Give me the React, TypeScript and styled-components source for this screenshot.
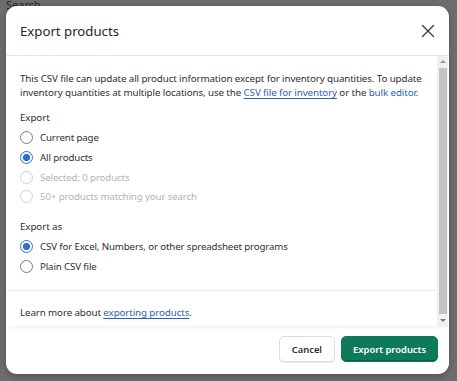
import React from "react";
import styled, { createGlobalStyle } from "styled-components";

const Global = createGlobalStyle`
  html, body { margin: 0; padding: 0; }
  body {
    width: 457px;
    height: 381px;
    overflow: hidden;
    background: #6b6b6b;
    font-family: "Noto Sans", "Open Sans", Arial, sans-serif;
  }
`;

const Page = styled.div`
  position: relative;
  width: 457px;
  height: 381px;
  background: #6d6d6d;
  overflow: hidden;
`;

const BehindBar = styled.div`
  display: flex;
  align-items: flex-start;
  padding: 0 0 0 6px;
  height: 14px;
  font-size: 11px;
  color: #2a2a2a;
  line-height: 9px;
  overflow: hidden;
`;

const Modal = styled.div`
  position: absolute;
  left: 6px;
  top: 6px;
  width: 443px;
  height: 368px;
  background: #ffffff;
  border-radius: 11px;
  display: flex;
  flex-direction: column;
  overflow: hidden;
  box-shadow: 0 2px 6px rgba(0, 0, 0, 0.25);
`;

const Header = styled.div`
  height: 49px;
  flex: none;
  display: flex;
  align-items: center;
  justify-content: space-between;
  padding: 0 10px 0 14px;
  border-bottom: 1px solid #e6e6e6;
`;

const Title = styled.h2`
  margin: 0;
  font-size: 13.2px;
  font-weight: 400;
  color: #262626;
`;

const CloseButton = styled.button`
  width: 22px;
  height: 22px;
  padding: 0;
  border: none;
  background: transparent;
  display: flex;
  align-items: center;
  justify-content: center;
  cursor: pointer;
`;

const ScrollFrame = styled.div`
  flex: 1;
  display: flex;
  min-height: 0;
  box-shadow: 0 4px 4px -3px rgba(0, 0, 0, 0.08);
  position: relative;
  z-index: 1;
`;

const ScrollContent = styled.div`
  flex: 1;
  display: flex;
  flex-direction: column;
  overflow: hidden;
`;

const Section = styled.div<{ $border?: boolean }>`
  flex: none;
  padding: ${(p) => (p.$border ? "15px 14px 0" : "16px 6px 14px 14px")};
  border-top: ${(p) => (p.$border ? "1px solid #ececec" : "none")};
  display: flex;
  flex-direction: column;
`;

const Para = styled.p`
  margin: 0;
  font-size: 9.8px;
  letter-spacing: -0.12px;
  line-height: 14px;
  color: #303030;
`;

const Link = styled.a<{ $underline?: boolean }>`
  color: #2a63b8;
  text-decoration: ${(p) => (p.$underline ? "underline" : "none")};
  text-underline-offset: 2px;
`;

const GroupLabel = styled.div<{ $gap?: number }>`
  margin-top: ${(p) => p.$gap ?? 10}px;
  font-size: 9.8px;
  letter-spacing: -0.1px;
  line-height: 16px;
  color: #303030;
`;

const RadioList = styled.div`
  display: flex;
  flex-direction: column;
  margin-top: 2px;
`;

const RadioRow = styled.label<{ $disabled?: boolean }>`
  display: flex;
  align-items: center;
  gap: 7px;
  height: 19.7px;
  font-size: 9.7px;
  letter-spacing: -0.12px;
  color: ${(p) => (p.$disabled ? "#b3b3b3" : "#303030")};
`;

const RadioCircle = styled.span<{ $checked?: boolean; $disabled?: boolean }>`
  width: 13px;
  height: 13px;
  box-sizing: border-box;
  border-radius: 50%;
  flex: none;
  border: 1.4px solid
    ${(p) => (p.$checked ? "#2f6fd0" : p.$disabled ? "#d0d0d0" : "#7c7c7c")};
  background: ${(p) => (p.$checked ? "radial-gradient(circle, #2f6fd0 0 3.3px, #ffffff 3.9px)" : "#ffffff")};
`;

const Scrollbar = styled.div`
  width: 11px;
  flex: none;
  background: #f1f1f1;
  display: flex;
  flex-direction: column;
  align-items: center;
  margin-right: 1px;
`;

const Arrow = styled.div<{ $down?: boolean }>`
  height: 11px;
  flex: none;
  display: flex;
  align-items: center;
  justify-content: center;
  &::after {
    content: "";
    width: 0;
    height: 0;
    border-left: 3px solid transparent;
    border-right: 3px solid transparent;
    ${(p) =>
      p.$down ? "border-top: 3px solid #7a7a7a;" : "border-bottom: 3px solid #9a9a9a;"}
  }
`;

const Thumb = styled.div`
  flex: 1;
  width: 8px;
  background: #c3c3c3;
  margin: 1px 0 1px;
`;

const Footer = styled.div`
  flex: none;
  height: 46px;
  display: flex;
  align-items: center;
  justify-content: flex-end;
  gap: 6px;
  padding: 0 11px 2px 0;
`;

const Button = styled.button<{ $primary?: boolean }>`
  height: 26px;
  padding: 0 ${(p) => (p.$primary ? 11 : 12)}px;
  border-radius: 5px;
  font-family: inherit;
  font-size: 9.4px;
  font-weight: 600;
  cursor: pointer;
  border: 1px solid ${(p) => (p.$primary ? "#0d7a58" : "#dcdcdc")};
  background: ${(p) => (p.$primary ? "#0f7a59" : "#ffffff")};
  color: ${(p) => (p.$primary ? "#ffffff" : "#303030")};
  box-shadow: ${(p) =>
    p.$primary ? "inset 0 -1px 0 rgba(0,0,0,0.2)" : "0 1px 0 rgba(0,0,0,0.08)"};
`;

type Opt = { label: string; checked?: boolean; disabled?: boolean };

const exportOpts: Opt[] = [
  { label: "Current page" },
  { label: "All products", checked: true },
  { label: "Selected: 0 products", disabled: true },
  { label: "50+ products matching your search", disabled: true },
];

const formatOpts: Opt[] = [
  { label: "CSV for Excel, Numbers, or other spreadsheet programs", checked: true },
  { label: "Plain CSV file" },
];

function Radios({ items }: { items: Opt[] }) {
  return (
    <RadioList>
      {items.map((o) => (
        <RadioRow key={o.label} $disabled={o.disabled}>
          <RadioCircle $checked={o.checked} $disabled={o.disabled} />
          {o.label}
        </RadioRow>
      ))}
    </RadioList>
  );
}

export default function App() {
  return (
    <>
      <Global />
      <Page>
        <BehindBar>Search</BehindBar>
        <Modal>
          <Header>
            <Title>Export products</Title>
            <CloseButton aria-label="Close">
              <svg width="14" height="14" viewBox="0 0 14 14">
                <path d="M1.5 1.5 L12.5 12.5 M12.5 1.5 L1.5 12.5" stroke="#3a3a3a" strokeWidth="1.3" strokeLinecap="round" />
              </svg>
            </CloseButton>
          </Header>
          <ScrollFrame>
            <ScrollContent>
              <Section>
                <Para>
                  This CSV file can update all product information except for inventory quantities. To update
                  <br />
                  inventory quantities at multiple locations, use the{" "}
                  <Link $underline href="#">CSV file for inventory</Link> or the <Link href="#">bulk editor</Link>.
                </Para>
                <GroupLabel>Export</GroupLabel>
                <Radios items={exportOpts} />
                <GroupLabel $gap={12}>Export as</GroupLabel>
                <Radios items={formatOpts} />
              </Section>
              <Section $border>
                <Para>
                  Learn more about <Link $underline href="#">exporting products</Link>.
                </Para>
              </Section>
            </ScrollContent>
            <Scrollbar>
              <Arrow />
              <Thumb />
              <Arrow $down />
            </Scrollbar>
          </ScrollFrame>
          <Footer>
            <Button>Cancel</Button>
            <Button $primary>Export products</Button>
          </Footer>
        </Modal>
      </Page>
    </>
  );
}
